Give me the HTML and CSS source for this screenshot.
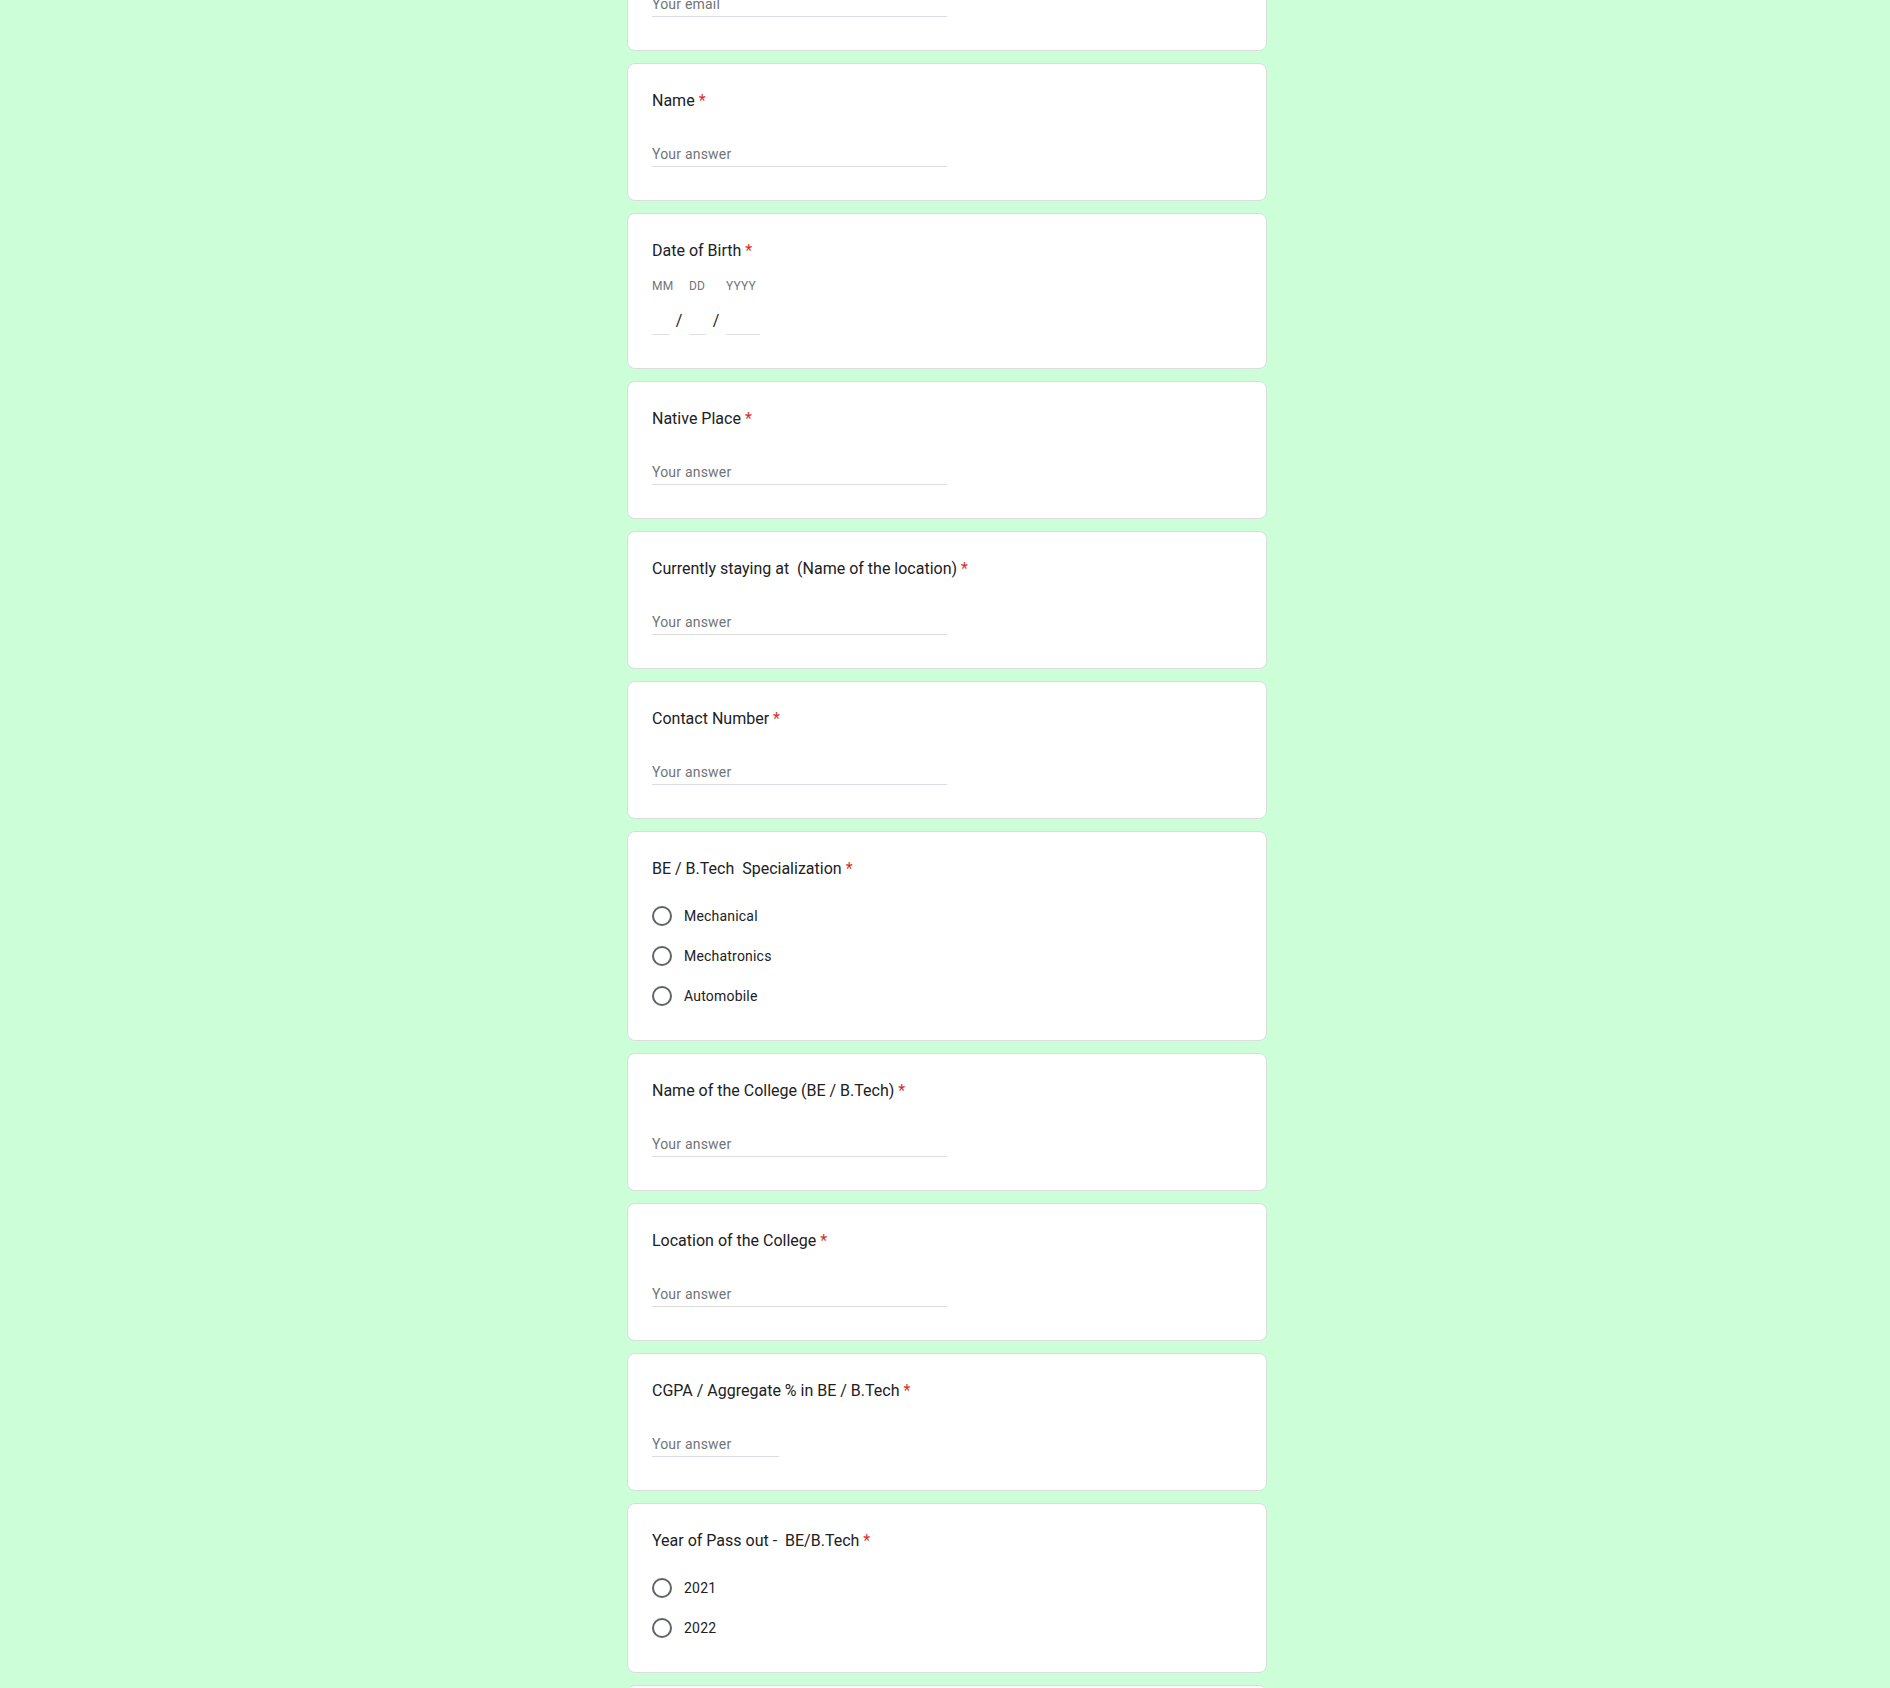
FILE: index.html
```html
<!DOCTYPE html>
<html lang="en">
<head>
<meta charset="utf-8">
<title>Form</title>
<link rel="stylesheet" href="styles.css">
</head>
<body>
<div class="page">
  <form class="form">
    <div class="card">
      <div class="q-title">Email<span class="req">*</span></div>
      <div class="answer"><input class="text-input" type="email" placeholder="Your email"></div>
    </div>

    <div class="card">
      <div class="q-title">Name<span class="req">*</span></div>
      <div class="answer"><input class="text-input" type="text" placeholder="Your answer"></div>
    </div>

    <div class="card">
      <div class="q-title">Date of Birth<span class="req">*</span></div>
      <div class="date">
        <div class="date-part">
          <div class="date-label">MM</div>
          <input class="date-input" type="text">
        </div>
        <div class="date-sep">/</div>
        <div class="date-part">
          <div class="date-label">DD</div>
          <input class="date-input" type="text">
        </div>
        <div class="date-sep">/</div>
        <div class="date-part year">
          <div class="date-label">YYYY</div>
          <input class="date-input" type="text">
        </div>
      </div>
    </div>

    <div class="card">
      <div class="q-title">Native Place<span class="req">*</span></div>
      <div class="answer"><input class="text-input" type="text" placeholder="Your answer"></div>
    </div>

    <div class="card">
      <div class="q-title">Currently staying at  (Name of the location)<span class="req">*</span></div>
      <div class="answer"><input class="text-input" type="text" placeholder="Your answer"></div>
    </div>

    <div class="card">
      <div class="q-title">Contact Number<span class="req">*</span></div>
      <div class="answer"><input class="text-input" type="text" placeholder="Your answer"></div>
    </div>

    <div class="card">
      <div class="q-title">BE / B.Tech  Specialization<span class="req">*</span></div>
      <div class="options">
        <label class="option"><span class="radio"></span><span class="option-label">Mechanical</span></label>
        <label class="option"><span class="radio"></span><span class="option-label">Mechatronics</span></label>
        <label class="option"><span class="radio"></span><span class="option-label">Automobile</span></label>
      </div>
    </div>

    <div class="card">
      <div class="q-title">Name of the College (BE / B.Tech)<span class="req">*</span></div>
      <div class="answer"><input class="text-input" type="text" placeholder="Your answer"></div>
    </div>

    <div class="card">
      <div class="q-title">Location of the College<span class="req">*</span></div>
      <div class="answer"><input class="text-input" type="text" placeholder="Your answer"></div>
    </div>

    <div class="card">
      <div class="q-title">CGPA / Aggregate % in BE / B.Tech<span class="req">*</span></div>
      <div class="answer"><input class="text-input short" type="text" placeholder="Your answer"></div>
    </div>

    <div class="card">
      <div class="q-title">Year of Pass out -  BE/B.Tech<span class="req">*</span></div>
      <div class="options">
        <label class="option"><span class="radio"></span><span class="option-label">2021</span></label>
        <label class="option"><span class="radio"></span><span class="option-label">2022</span></label>
      </div>
    </div>

    <div class="card">
      <div class="q-title">Current Status<span class="req">*</span></div>
      <div class="answer"><input class="text-input" type="text" placeholder="Your answer"></div>
    </div>
  </form>
</div>
</body>
</html>
```
FILE: styles.css
```css
html, body {
  margin: 0;
  padding: 0;
}

body {
  background: #ccffd7;
  font-family: Roboto, "Liberation Sans", Arial, sans-serif;
  color: #202124;
  overflow: hidden;
}

.page {
  width: 644px;
  padding-left: 4px;
  box-sizing: border-box;
  margin: 0 auto;
}

.form {
  margin: -87px 0 0;
  display: flex;
  flex-direction: column;
  gap: 12px;
}

.card {
  background: #fff;
  border: 1px solid #dadce0;
  border-radius: 8px;
  padding: 25px 24px 23px;
  width: 640px;
  box-sizing: border-box;
}

.q-title {
  font-size: 16px;
  line-height: 24px;
  letter-spacing: 0;
  color: #202124;
  white-space: pre-wrap;
}

.req {
  color: #d93025;
  padding-left: 4px;
}

.answer {
  margin: 31px 0 10px;
}

.text-input {
  display: block;
  width: 50%;
  height: 20px;
  margin: 0;
  padding: 0 0 2px;
  border: 0;
  border-bottom: 1px solid #dadce0;
  outline: none;
  background: transparent;
  font-family: inherit;
  font-size: 14px;
  line-height: 20px;
  letter-spacing: 0.2px;
  color: #202124;
  box-sizing: content-box;
}

.text-input.short {
  width: 127px;
}

.text-input::placeholder {
  color: #70757a;
  opacity: 1;
}

.date {
  display: flex;
  align-items: flex-end;
  margin: 15px 0 10px;
}

.date-part {
  width: 17px;
  display: flex;
  flex-direction: column;
}

.date-part.year {
  width: 34px;
}

.date-label {
  font-size: 12px;
  line-height: 16px;
  color: #70757a;
  white-space: nowrap;
  margin-bottom: 15px;
  letter-spacing: 0.2px;
}

.date-input {
  display: block;
  width: 100%;
  height: 24px;
  margin: 0;
  padding: 0 0 1px;
  border: 0;
  border-bottom: 1px solid #e0e0e0;
  outline: none;
  background: transparent;
  font-family: inherit;
  font-size: 16px;
  box-sizing: content-box;
}

.date-sep {
  width: 20px;
  text-align: center;
  font-size: 16px;
  line-height: 24px;
  padding-bottom: 2px;
  color: #202124;
}

.options {
  margin: 15px 0 1px;
  display: flex;
  flex-direction: column;
}

.option {
  display: flex;
  align-items: center;
  height: 40px;
}

.radio {
  width: 20px;
  height: 20px;
  border: 2px solid #5f6368;
  border-radius: 50%;
  box-sizing: border-box;
  flex: none;
}

.option-label {
  margin-left: 12px;
  font-size: 14px;
  line-height: 20px;
  letter-spacing: 0.2px;
  color: #202124;
}
```
